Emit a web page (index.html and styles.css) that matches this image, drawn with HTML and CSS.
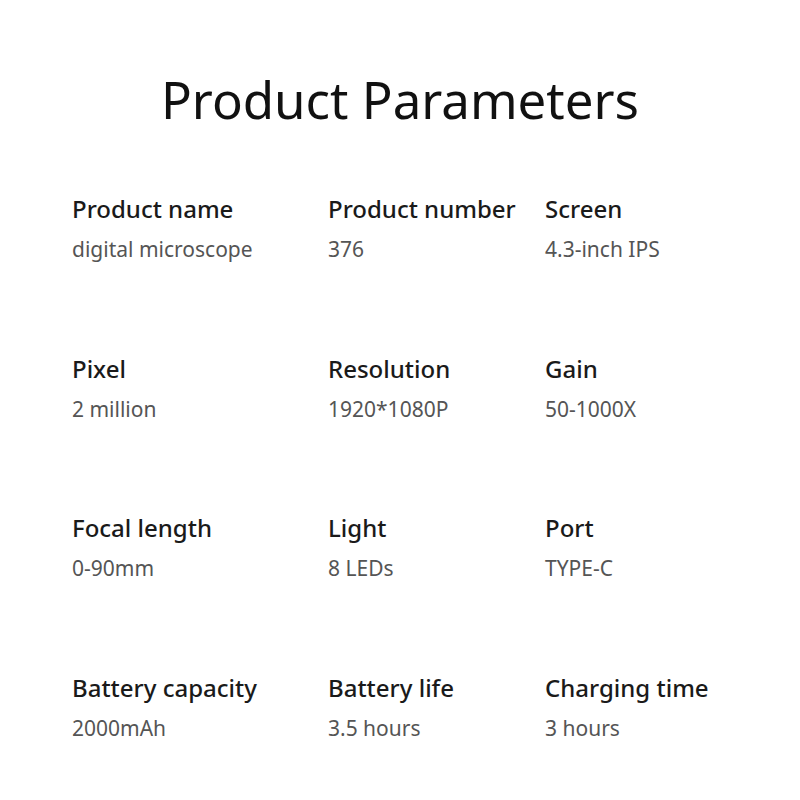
FILE: index.html
```html
<!DOCTYPE html>
<html>
<head>
<meta charset="utf-8">
<link rel="stylesheet" href="styles.css">
</head>
<body>
<div class="page">
  <h1 class="title">Product Parameters</h1>
  <div class="grid">
    <div class="item"><div class="label">Product name</div><div class="value">digital microscope</div></div>
    <div class="item"><div class="label">Product number</div><div class="value">376</div></div>
    <div class="item"><div class="label">Screen</div><div class="value">4.3-inch IPS</div></div>
    <div class="item"><div class="label">Pixel</div><div class="value">2 million</div></div>
    <div class="item"><div class="label">Resolution</div><div class="value">1920*1080P</div></div>
    <div class="item"><div class="label">Gain</div><div class="value">50-1000X</div></div>
    <div class="item"><div class="label">Focal length</div><div class="value">0-90mm</div></div>
    <div class="item"><div class="label">Light</div><div class="value">8 LEDs</div></div>
    <div class="item"><div class="label">Port</div><div class="value">TYPE-C</div></div>
    <div class="item"><div class="label">Battery capacity</div><div class="value">2000mAh</div></div>
    <div class="item"><div class="label">Battery life</div><div class="value">3.5 hours</div></div>
    <div class="item"><div class="label">Charging time</div><div class="value">3 hours</div></div>
  </div>
</div>
</body>
</html>
```
FILE: styles.css
```css
html, body {
  margin: 0;
  padding: 0;
  background: #fff;
}
.page {
  width: 800px;
  height: 800px;
  font-family: "Noto Sans", "Open Sans", sans-serif;
  color: #111;
}
.title {
  margin: 0;
  padding-top: 64px;
  text-align: center;
  font-size: 51px;
  font-weight: 400;
  line-height: 70px;
  color: #111;
}
.grid {
  display: grid;
  grid-template-columns: 256px 217px 1fr;
  grid-auto-rows: 159.5px;
  padding-left: 72px;
  margin-top: 60px;
}
.item {
  display: flex;
  flex-direction: column;
}
.label {
  font-size: 24px;
  font-weight: 500;
  line-height: 30px;
  color: #1a1a1a;
}
.value {
  margin-top: 11px;
  font-size: 21px;
  line-height: 28px;
  color: #555;
}
```
